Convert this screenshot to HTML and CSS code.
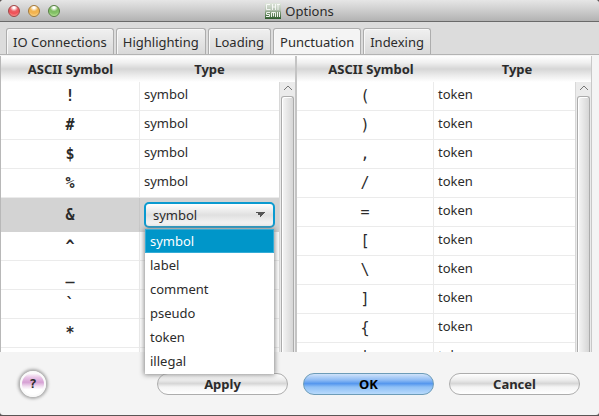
FILE: index.html
```html
<!DOCTYPE html>
<html lang="en">
<head>
<meta charset="utf-8">
<title>Options</title>
<link rel="stylesheet" href="styles.css">
</head>
<body>
<div class="window">
  <header class="titlebar">
    <div class="lights">
      <button class="light red" aria-label="Close"></button>
      <button class="light amber" aria-label="Minimize"></button>
      <button class="light green" aria-label="Zoom"></button>
    </div>
    <h1 class="title">
      <svg class="app-icon" width="16" height="16" viewBox="0 0 16 16" aria-hidden="true">
        <defs><linearGradient id="g" x1="0" y1="0" x2="0" y2="1"><stop offset="0" stop-color="#dfe6dc"/><stop offset=".45" stop-color="#b4c2b1"/><stop offset=".6" stop-color="#7d9a76"/><stop offset="1" stop-color="#2c5a2b"/></linearGradient></defs>
        <rect width="16" height="16" fill="url(#g)"/>
        <path d="M5 1.500H1.500v5h4M7.500 1v6M7.500 4h3M10.500 1v6M13 1v6M12 1.500h3" fill="none" stroke="#fff" stroke-opacity=".8"/>
        <path d="M5 9.500H1.500v2h3v2H1M6.500 14V9.500h4V14M8.500 9.500v4M12.500 9v5M14.500 9v5" fill="none" stroke="#f0f4ee"/>
      </svg>
      Options
    </h1>
  </header>
  <nav class="tabs" role="tablist">
    <button class="tab" role="tab">IO Connections</button>
    <button class="tab" role="tab">Highlighting</button>
    <button class="tab" role="tab">Loading</button>
    <button class="tab active" role="tab" aria-selected="true">Punctuation</button>
    <button class="tab" role="tab">Indexing</button>
  </nav>
  <main class="panes">
    <section class="pane">
      <table class="left">
        <colgroup><col><col><col class="bar-col"></colgroup>
        <thead><tr><th>ASCII Symbol</th><th>Type</th><th></th></tr></thead>
        <tbody>
          <tr><td class="sym">!</td><td>symbol</td><td class="bar" rowspan="10"><div class="track"><svg width="10" height="6" viewBox="0 0 10 6" aria-hidden="true"><path d="M1 5l4-4 4 4" fill="none" stroke="#777"/></svg><div class="thumb"></div></div></td></tr>
          <tr><td class="sym">#</td><td>symbol</td></tr>
          <tr><td class="sym">$</td><td>symbol</td></tr>
          <tr><td class="sym">%</td><td>symbol</td></tr>
          <tr class="selected"><td class="sym">&amp;</td><td><select class="combo" aria-label="Type of &amp;"><option>symbol</option><option>label</option><option>comment</option><option>pseudo</option><option>token</option><option>illegal</option></select></td></tr>
          <tr><td class="sym">^</td><td></td></tr>
          <tr><td class="sym">_</td><td></td></tr>
          <tr><td class="sym">`</td><td></td></tr>
          <tr><td class="sym">*</td><td></td></tr>
          <tr><td class="sym"></td><td></td></tr>
        </tbody>
      </table>
    </section>
    <section class="pane">
      <table class="right">
        <colgroup><col class="sym-col"><col><col class="bar-col"></colgroup>
        <thead><tr><th>ASCII Symbol</th><th>Type</th><th></th></tr></thead>
        <tbody>
          <tr><td class="sym">(</td><td>token</td><td class="bar" rowspan="10"><div class="track"><svg width="10" height="6" viewBox="0 0 10 6" aria-hidden="true"><path d="M1 5l4-4 4 4" fill="none" stroke="#777"/></svg><div class="thumb"></div></div></td></tr>
          <tr><td class="sym">)</td><td>token</td></tr>
          <tr><td class="sym">,</td><td>token</td></tr>
          <tr><td class="sym">/</td><td>token</td></tr>
          <tr><td class="sym">=</td><td>token</td></tr>
          <tr><td class="sym">[</td><td>token</td></tr>
          <tr><td class="sym">\</td><td>token</td></tr>
          <tr><td class="sym">]</td><td>token</td></tr>
          <tr><td class="sym">{</td><td>token</td></tr>
          <tr><td class="sym">|</td><td>token</td></tr>
        </tbody>
      </table>
    </section>
  </main>
  <footer class="actions">
    <button class="help" aria-label="Help">?</button>
    <button class="push">Apply</button>
    <button class="push default">OK</button>
    <button class="push">Cancel</button>
  </footer>
  <ul class="menu" role="listbox" aria-label="Type">
    <li class="current" role="option" aria-selected="true">symbol</li>
    <li role="option">label</li>
    <li role="option">comment</li>
    <li role="option">pseudo</li>
    <li role="option">token</li>
    <li role="option">illegal</li>
  </ul>
</div>
</body>
</html>
```
FILE: styles.css
```css
* { box-sizing: border-box; }
body {
  margin: 0;
  font: 13px/18px "Noto Sans", sans-serif;
  color: #2b2b2b;
  background: #5b5555;
}
button, select { font: inherit; color: inherit; margin: 0; }
.window {
  position: relative;
  display: flex;
  flex-direction: column;
  height: calc(100vh - 1px);
  background: #f4f4f4;
  border-radius: 4px 4px 3px 3px;
  overflow: hidden;
}
.titlebar {
  display: grid;
  grid-template-columns: 60px 1fr 60px;
  align-items: center;
  height: 22px;
  flex: none;
  padding: 0 8px;
  background: linear-gradient(#e6e6e6, #cfcfcf 45%, #b2b2b2);
  border-bottom: 1px solid #6a6a6a;
}
.lights { display: flex; gap: 8px; }
.light {
  width: 12px;
  height: 12px;
  padding: 0;
  border: 1px solid;
  border-radius: 50%;
}
.red { border-color: #a04646; background: radial-gradient(circle at 50% 15%, #fff 0 10%, #ec5f64 40%, #f04f56 60%, #ffb0a8); }
.amber { border-color: #a3793a; background: radial-gradient(circle at 50% 15%, #fff 0 10%, #f0b350 40%, #f3b350 60%, #ffe9a8); }
.green { border-color: #567f42; background: radial-gradient(circle at 50% 15%, #fff 0 10%, #7fbc62 40%, #84c267 60%, #d0f5b0); }
.title {
  display: flex;
  align-items: center;
  justify-content: center;
  gap: 4px;
  margin: 0;
  font-size: 13px;
  font-weight: 400;
}
.tabs {
  display: flex;
  align-items: flex-end;
  gap: 2px;
  height: 33px;
  flex: none;
  padding: 0 6px;
  background: #dcdcdc;
  border-bottom: 1px solid #b3b3b3;
}
.tab {
  height: 26px;
  padding: 0 6px;
  border: 1px solid #adadad;
  border-bottom: 0;
  border-radius: 3px 3px 0 0;
  background: linear-gradient(#f0f0f0, #d9d9d9);
  box-shadow: inset 1px 1px #f8f8f8;
}
.tab.active { background: #f4f4f4; }
.panes {
  display: grid;
  grid-template-columns: 295fr 297fr;
  flex: 1;
  min-height: 0;
  padding: 1px 7px 0 0;
}
.pane {
  overflow: hidden;
  background: #fff;
  border-left: 1px solid #b8b8b8;
}
.pane + .pane { border-left: 2px solid #c4c4c4; border-right: 1px solid #c8c8c8; }
table {
  width: 100%;
  table-layout: fixed;
  border-collapse: separate;
  border-spacing: 0;
}
.bar-col { width: 16px; }
.right .sym-col { width: 137px; }
thead tr { background: linear-gradient(#fff, #f0f0f0 25%, #d6d6d6 50%, #ececec 75%, #fff); }
th { height: 26px; padding: 0; font-weight: 700; line-height: 18px; }
.right th { padding-left: 11px; }
.right th + th { padding-left: 25px; }
.right th:last-child { padding: 0; }
td {
  height: 29px;
  padding: 0 0 4px 4px;
  border-bottom: 1px solid #ebebeb;
}
.sym {
  padding: 0;
  border-right: 1px solid #ebebeb;
  font: 700 15px/18px "DejaVu Sans Mono", monospace;
  text-align: center;
}
.right .sym { font-weight: 400; }
.selected td { height: 34px; background: #d3d3d3; border-color: #d3d3d3; padding-bottom: 0; }
.selected .sym { border-right-color: #c8c8c8; }
.combo {
  display: block;
  width: calc(100% - 4px);
  height: 26px;
  padding: 0 7px;
  appearance: none;
  border: 2px solid #0a9ad0;
  border-radius: 5px;
  background-image:
    linear-gradient(to bottom right, #555 50%, transparent 50%),
    linear-gradient(to bottom left, #555 50%, transparent 50%),
    linear-gradient(#fff, #e0e0e0 50%, #fafafa);
  background-size: 5px 5px, 5px 5px, auto;
  background-position: right 7px center, right 12px center, 0 0;
  background-repeat: no-repeat;
}
.bar { padding: 0; border: 0; vertical-align: top; }
.track {
  display: flex;
  flex-direction: column;
  align-items: center;
  height: 290px;
  padding: 3px 1px 0;
  gap: 5px;
  border-left: 1px solid #d8d8d8;
  background: #ebebeb;
}
.track svg { flex: none; }
.thumb {
  width: 13px;
  flex: 1;
  border: 1px solid #acacac;
  border-bottom: 0;
  border-radius: 3px 3px 0 0;
  background: linear-gradient(90deg, #f6f6f6, #d6d6d6);
  box-shadow: inset 1px 1px #fff;
}
.actions {
  display: flex;
  align-items: center;
  gap: 15px;
  height: 63px;
  flex: none;
  padding: 0 19px 0 20px;
}
.help {
  width: 26px;
  height: 26px;
  margin-right: auto;
  padding: 0;
  border: 2px solid #fafafa;
  border-radius: 50%;
  background: linear-gradient(#fff, #e9c6e7 20%, #d6a0d4 42%, #f0dcef 60%, #fff 75%);
  box-shadow: 0 0 3px 2px #aaa;
  font: 700 13px/18px "DejaVu Sans Mono", monospace;
}
.push {
  width: 131px;
  height: 22px;
  padding: 0;
  border: 1px solid #adadad;
  border-radius: 11px;
  background: linear-gradient(#fff, #ececec 30%, #d6d6d6 48%, #f4f4f4 65%, #fff);
  font-weight: 700;
  line-height: 18px;
}
.default {
  border-color: #6d9cb8;
  color: #000;
  background: linear-gradient(#d0e3fa, #8fbcf4 30%, #5597ee 48%, #8fc0f6 65%, #b8dafc);
}
.menu {
  position: absolute;
  left: 145px;
  top: 229px;
  width: 129px;
  margin: 0;
  padding: 0 0 1px;
  list-style: none;
  background: #fff;
  box-shadow: 0 0 5px 1px #8c8c8c;
}
.menu li { height: 24px; padding: 0 5px; line-height: 24px; }
.menu .current { color: #fff; background: #0096c9; box-shadow: inset 0 0 0 1px #35acd6; }
```
